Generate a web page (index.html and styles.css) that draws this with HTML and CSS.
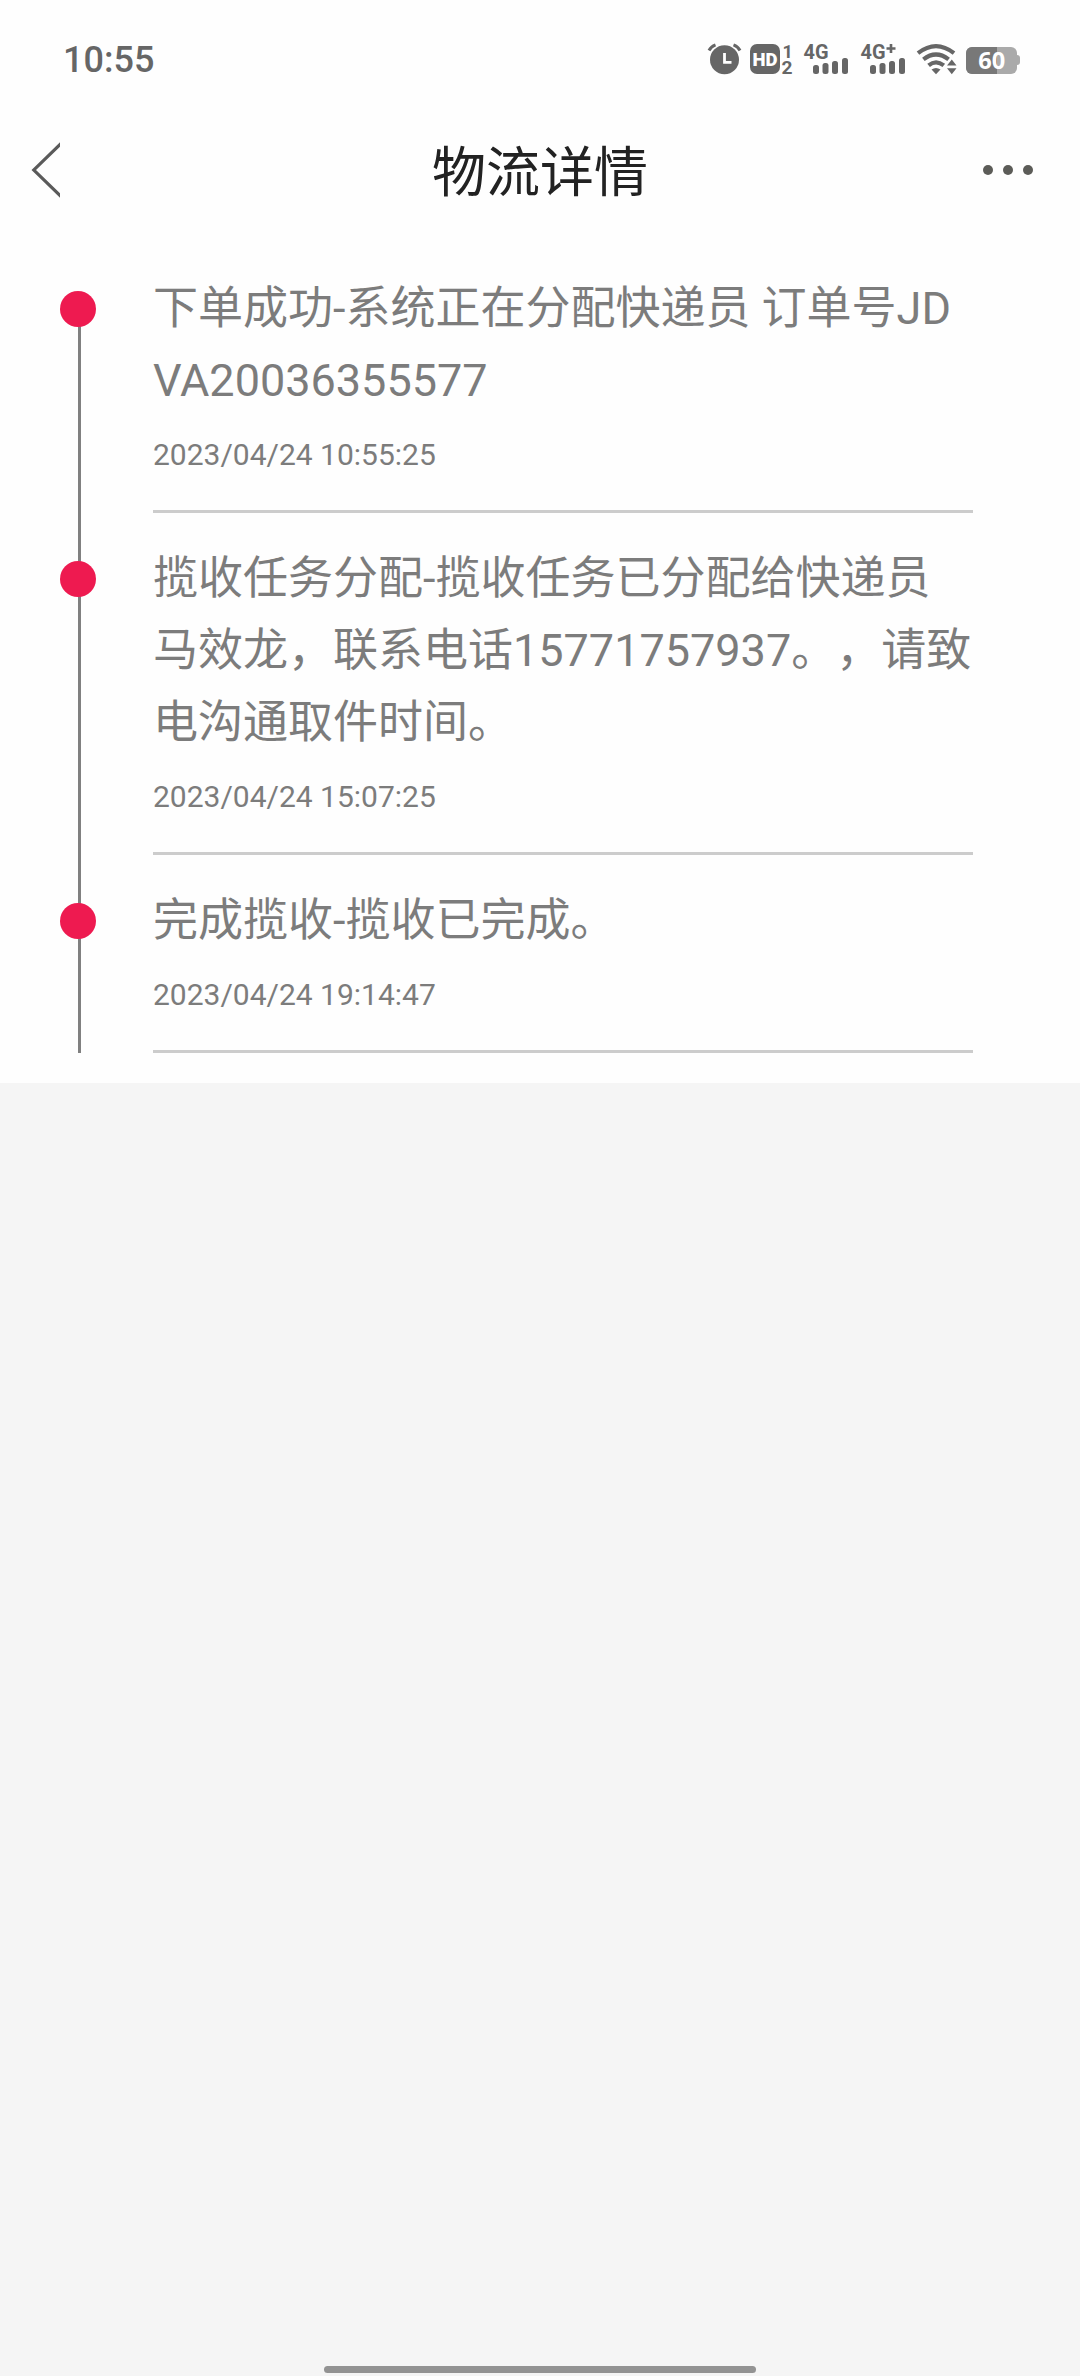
FILE: index.html
```html
<!DOCTYPE html>
<html lang="zh-CN">
  <head>
    <meta charset="UTF-8" />
    <meta name="viewport" content="width=device-width, initial-scale=1.0" />
    <title>物流详情</title>
    <link rel="stylesheet" href="styles.css">
  </head>
  <body>
    <div class="page">
      <div class="status-bar">
        <span class="clock">10:55</span>
        <svg class="status-icons" width="316" height="36" viewBox="706 40 316 36">
          <!-- alarm -->
          <circle cx="724.5" cy="58.7" r="14.5" fill="#666" />
          <path d="M709 49.5Q711 45.5 715.5 43.8M733.5 43.8Q738 45.5 740 49.5" fill="none" stroke="#666" stroke-width="3" />
          <path d="M724.5 52v9.3h7" fill="none" stroke="#fff" stroke-width="2.8" />
          <!-- HD -->
          <rect x="750" y="43" width="30" height="30" rx="7" fill="#666" />
          <text class="hd" x="752.5" y="65" textLength="25" lengthAdjust="spacingAndGlyphs">HD</text>
          <text class="sim" x="782.5" y="56.5">1</text>
          <text class="sim" x="781.5" y="73" textLength="11" lengthAdjust="spacingAndGlyphs">2</text>
          <!-- signal -->
          <text class="net" x="803.5" y="57.5" textLength="25" lengthAdjust="spacingAndGlyphs">4G</text>
          <g fill="#666">
            <rect x="813" y="64" width="6" height="9" rx="2.5" />
            <rect x="822.5" y="62" width="6" height="11" rx="2.5" />
            <rect x="832" y="60" width="6" height="13" rx="2.5" />
            <rect x="842" y="57" width="6" height="16" rx="2.5" />
          </g>
          <text class="net" x="860.5" y="57.5" textLength="25" lengthAdjust="spacingAndGlyphs">4G</text>
          <path d="M886.5 47.5h9M891 43v9" stroke="#666" stroke-width="2.6" />
          <g fill="#666">
            <rect x="870" y="64" width="6" height="9" rx="2.5" />
            <rect x="879.5" y="62" width="6" height="11" rx="2.5" />
            <rect x="889" y="60" width="6" height="13" rx="2.5" />
            <rect x="899" y="57" width="6" height="16" rx="2.5" />
          </g>
          <!-- wifi -->
          <g fill="none" stroke="#666" stroke-width="4.2">
            <path d="M918 52.2Q936 38.2 954 52.2" />
            <path d="M923.4 58.4Q936 48.6 948.6 58.4" />
            <path d="M928.6 64.4Q936 58.4 943.8 64.4" />
          </g>
          <path d="M931.5 68.5Q936 65.5 940.5 68.5L936 73.2Z" fill="#666" />
          <path d="M947 64.5h9.5L951.8 58.5ZM947 67.3h9.5L951.8 73.2Z" fill="#666" />
          <!-- battery -->
          <rect x="966" y="46" width="51" height="27" rx="6" fill="#aaa" />
          <path d="M997 46h-25a6 6 0 0 0-6 6v15a6 6 0 0 0 6 6h25Z" fill="#787878" />
          <path d="M1016 54h1q3 0 3 3v4q0 3-3 3h-1Z" fill="#aaa" />
          <text class="level" x="978.3" y="68" textLength="27" lengthAdjust="spacingAndGlyphs">60</text>
        </svg>
      </div>

      <div class="nav">
        <svg width="32" height="56" viewBox="30 142 32 56">
          <path d="M60 142.3V146.7L36 170L60 193.3V197.7L31.5 170Z" fill="#5a5a5a" />
        </svg>
        <h1>物流详情</h1>
        <svg width="52" height="12" viewBox="982 165 52 12" fill="#5c5c58">
          <circle cx="988" cy="171" r="5" />
          <circle cx="1008" cy="171" r="5" />
          <circle cx="1028" cy="171" r="5" />
        </svg>
      </div>

      <ul class="timeline">
        <li>
          <p class="info">下单成功-系统正在分配快递员 订单号JD<br>VA20036355577</p>
          <p class="time">2023/04/24 10:55:25</p>
        </li>
        <li>
          <p class="info">揽收任务分配-揽收任务已分配给快递员<br>马效龙，联系电话15771757937。，请致<br>电沟通取件时间。</p>
          <p class="time">2023/04/24 15:07:25</p>
        </li>
        <li>
          <p class="info">完成揽收-揽收已完成。</p>
          <p class="time">2023/04/24 19:14:47</p>
        </li>
      </ul>
    </div>
    <div class="home-bar"></div>
  </body>
</html>
```
FILE: styles.css
```css
* {
  box-sizing: border-box;
}
body {
  margin: 0;
  min-height: 2376px;
  display: flex;
  flex-direction: column;
  justify-content: space-between;
  background: #f5f5f5;
  font-family: Roboto, "Noto Sans CJK SC", sans-serif;
}
.page {
  height: 1083px;
  background: #fefefe;
}
.status-bar {
  height: 116px;
  padding: 2px 58px 0 63px;
  display: flex;
  align-items: center;
  justify-content: space-between;
}
.clock {
  padding-top: 2px;
  font-size: 36px;
  font-weight: 500;
  color: #666;
}
.status-icons text {
  font-family: Roboto, sans-serif;
  font-weight: 700;
  fill: #666;
}
.status-icons .hd {
  font-size: 19px;
  font-weight: 900;
  fill: #fff;
}
.status-icons .sim {
  font-size: 18px;
}
.status-icons .net {
  font-size: 20px;
}
.status-icons .level {
  font-family: "Open Sans", sans-serif;
  font-size: 24px;
  fill: #fff;
}
.nav {
  height: 108px;
  padding: 0 46px 0 30px;
  display: grid;
  grid-template-columns: 52px 1fr 52px;
  align-items: center;
}
.nav h1 {
  margin: 0;
  padding: 8px 0 0 16px;
  font-size: 54px;
  font-weight: 400;
  line-height: 80px;
  text-align: center;
  color: #222;
}
.timeline {
  margin: 0;
  padding: 19px 107px 0 60px;
  list-style: none;
}
.timeline li {
  position: relative;
  padding-left: 93px;
}
/* vertical line and dot */
.timeline li::before {
  content: "";
  position: absolute;
  left: 18px;
  top: 0;
  bottom: 0;
  width: 3px;
  background: #808080;
}
.timeline li:first-child::before {
  top: 66px;
}
.timeline li::after {
  content: "";
  position: absolute;
  left: 0;
  top: 48px;
  width: 36px;
  height: 36px;
  border-radius: 50%;
  background: #ee1a50;
}
.info {
  margin: 0;
  padding-top: 30px;
  font-size: 45px;
  line-height: 72px;
  color: #7c7c7c;
  white-space: nowrap;
  text-spacing-trim: space-all;
}
.time {
  margin: 0;
  height: 96px;
  padding-top: 18px;
  border-bottom: 3px solid #ccc;
  font-size: 30px;
  line-height: 40px;
  color: #7c7c7c;
}
.home-bar {
  width: 432px;
  height: 7px;
  margin: 0 auto 3px;
  border-radius: 4px;
  background: #939393;
}
```
